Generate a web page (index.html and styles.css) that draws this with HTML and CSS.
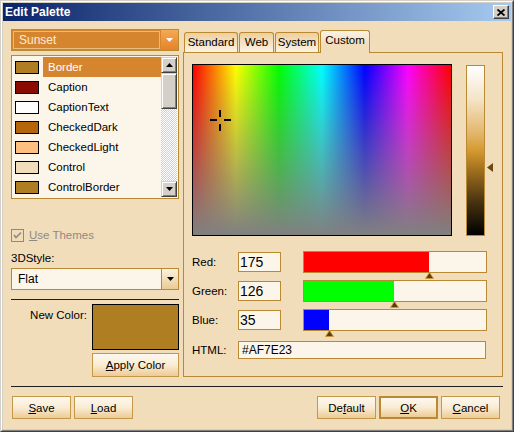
FILE: index.html
```html
<!DOCTYPE html>
<html lang="en">
<head>
<meta charset="UTF-8">
<title>Edit Palette</title>
<link rel="stylesheet" href="styles.css">
</head>
<body>
<div class="window">
  <div class="frame">

    <div class="titlebar">
      <span class="title">Edit Palette</span>
      <div class="close">
        <svg width="8" height="7" viewBox="0 0 8 7"><path d="M0.5 0.5 L7.5 6.5 M7.5 0.5 L0.5 6.5" stroke="#000" stroke-width="1.8"/></svg>
      </div>
    </div>

    <div class="body">
      <div class="main">

        <div class="left">
          <div class="combo combo-scheme">
            <div class="combo-value">Sunset</div>
            <div class="combo-btn">
              <svg width="7" height="4" viewBox="0 0 7 4"><polygon points="0,0 7,0 3.5,4" fill="#fff"/></svg>
            </div>
          </div>

          <div class="list">
            <ul class="items">
              <li class="item selected"><span class="swatch" style="background:#AF7E23"></span><span class="name">Border</span></li>
              <li class="item"><span class="swatch" style="background:#8B0B00"></span><span class="name">Caption</span></li>
              <li class="item"><span class="swatch" style="background:#FFFFFF"></span><span class="name">CaptionText</span></li>
              <li class="item"><span class="swatch" style="background:#B5650A"></span><span class="name">CheckedDark</span></li>
              <li class="item"><span class="swatch" style="background:#FFBF80"></span><span class="name">CheckedLight</span></li>
              <li class="item"><span class="swatch" style="background:#F2DDBB"></span><span class="name">Control</span></li>
              <li class="item"><span class="swatch" style="background:#AF7E23"></span><span class="name">ControlBorder</span></li>
            </ul>
            <div class="scrollbar">
              <div class="sb-btn">
                <svg width="7" height="4" viewBox="0 0 7 4"><polygon points="3.5,0 7,4 0,4" fill="#000"/></svg>
              </div>
              <div class="sb-thumb"></div>
              <div class="sb-track"></div>
              <div class="sb-btn">
                <svg width="7" height="4" viewBox="0 0 7 4"><polygon points="0,0 7,0 3.5,4" fill="#000"/></svg>
              </div>
            </div>
          </div>

          <div class="check">
            <span class="check-box">
              <svg width="11" height="11" viewBox="0 0 11 11"><polyline points="2,5 4,7.5 9,2.5" fill="none" stroke="#8E8A82" stroke-width="1.6"/></svg>
            </span>
            <span class="check-text"><u>U</u>se Themes</span>
          </div>

          <div class="field-label">3DStyle:</div>
          <div class="combo combo-style">
            <div class="combo-value">Flat</div>
            <div class="combo-btn">
              <svg width="7" height="4" viewBox="0 0 7 4"><polygon points="0,0 7,0 3.5,4" fill="#000"/></svg>
            </div>
          </div>

          <div class="sep"></div>

          <div class="newcolor">
            <span class="newcolor-label">New Color:</span>
            <div class="preview"></div>
          </div>
          <button class="btn apply"><u>A</u>pply Color</button>
        </div>

        <div class="right">
          <div class="tabs">
            <div class="tab tab-standard">Standard</div>
            <div class="tab tab-web">Web</div>
            <div class="tab tab-system">System</div>
            <div class="tab tab-custom active">Custom</div>
          </div>
          <div class="panel">
            <div class="picker">
              <div class="spectrum">
                <svg class="crosshair" width="21" height="21" viewBox="0 0 21 21">
                  <path d="M0 10 H7 M14 10 H21 M10 0 V7 M10 14 V21" stroke="#000" stroke-width="2"/>
                </svg>
              </div>
              <div class="lum">
                <svg class="lum-arrow" width="6" height="9" viewBox="0 0 6 9"><polygon points="0,4.5 6,0 6,9" fill="#6B4A12"/></svg>
              </div>
            </div>

            <div class="rows">
              <div class="row">
                <span class="row-label">Red:</span>
                <div class="num">175</div>
                <div class="bar">
                  <div class="fill fill-red" style="width:125px"></div>
                  <svg class="marker" style="left:121px" width="9" height="7" viewBox="0 0 9 7"><polygon points="4.5,0.5 8.5,6.5 0.5,6.5" fill="#5C3D08" stroke="#C8963C" stroke-width="1"/></svg>
                </div>
              </div>
              <div class="row">
                <span class="row-label">Green:</span>
                <div class="num">126</div>
                <div class="bar">
                  <div class="fill fill-green" style="width:90px"></div>
                  <svg class="marker" style="left:86px" width="9" height="7" viewBox="0 0 9 7"><polygon points="4.5,0.5 8.5,6.5 0.5,6.5" fill="#5C3D08" stroke="#C8963C" stroke-width="1"/></svg>
                </div>
              </div>
              <div class="row">
                <span class="row-label">Blue:</span>
                <div class="num">35</div>
                <div class="bar">
                  <div class="fill fill-blue" style="width:25px"></div>
                  <svg class="marker" style="left:21px" width="9" height="7" viewBox="0 0 9 7"><polygon points="4.5,0.5 8.5,6.5 0.5,6.5" fill="#5C3D08" stroke="#C8963C" stroke-width="1"/></svg>
                </div>
              </div>
              <div class="row html-row">
                <span class="row-label">HTML:</span>
                <div class="html-input">#AF7E23</div>
              </div>
            </div>
          </div>
        </div>

      </div>

      <div class="bottom-sep"></div>

      <div class="footer">
        <div class="footer-group">
          <button class="btn"><u>S</u>ave</button>
          <button class="btn"><u>L</u>oad</button>
        </div>
        <div class="footer-group">
          <button class="btn">De<u>f</u>ault</button>
          <button class="btn btn-default"><u>O</u>K</button>
          <button class="btn"><u>C</u>ancel</button>
        </div>
      </div>
    </div>

  </div>
</div>
</body>
</html>
```

FILE: styles.css
```css
* {
  box-sizing: border-box;
}

body {
  margin: 0;
  font-family: "Liberation Sans", Arial, sans-serif;
  font-size: 11px;
  color: #000;
}

.window {
  width: 514px;
  height: 432px;
  border: 1px solid;
  border-color: #D4D0C8 #404040 #404040 #D4D0C8;
}

.frame {
  height: 100%;
  border: 1px solid;
  border-color: #FFFFFF #808080 #808080 #FFFFFF;
  padding: 1px;
  background: #D4D0C8;
}

/* title bar */
.titlebar {
  height: 18px;
  display: flex;
  align-items: center;
  justify-content: space-between;
  padding: 0 2px 0 2px;
  background: linear-gradient(to right, #0A246A, #A6CAF0);
}

.title {
  color: #fff;
  font-weight: bold;
  font-size: 12px;
}

.close {
  width: 16px;
  height: 14px;
  display: flex;
  align-items: center;
  justify-content: center;
  background: #D4D0C8;
  border: 1px solid;
  border-color: #FFFFFF #404040 #404040 #FFFFFF;
  box-shadow: inset -1px -1px #808080;
}

/* dialog body */
.body {
  height: 408px;
  background: #F2DDBB;
  padding: 8px 8px 0 8px;
}

.main {
  display: flex;
  gap: 4px;
  height: 348px;
}

.left {
  width: 168px;
  display: flex;
  flex-direction: column;
}

.right {
  width: 320px;
  display: flex;
  flex-direction: column;
}

/* combos */
.combo {
  height: 22px;
  display: flex;
  border: 1px solid #B98A33;
  background: #FCF6EA;
  font-size: 12px;
}

.combo-value {
  flex: 1;
  display: flex;
  align-items: center;
  padding-left: 6px;
}

.combo-btn {
  width: 17px;
  display: flex;
  align-items: center;
  justify-content: center;
  border-left: 1px solid #B98A33;
  background: linear-gradient(#FCF1DF, #EBCB93);
}

.combo-scheme {
  background: #D6852F;
}

.combo-scheme .combo-value {
  margin: 1px;
  padding-left: 5px;
  border: 1px solid rgba(255, 230, 190, 0.55);
  color: #FCEBD2;
}

.combo-scheme .combo-btn {
  border-left: none;
  background: linear-gradient(#F5A954, #E5822A);
}

.combo-style {
  margin-top: 3px;
}

/* colour list */
.list {
  margin-top: 4px;
  height: 144px;
  display: flex;
  border: 1px solid #B98A33;
  background: #FCF6EA;
}

.items {
  flex: 1;
  list-style: none;
  margin: 0;
  padding: 1px 0 0 0;
  overflow: hidden;
}

.item {
  height: 20px;
  display: flex;
  align-items: center;
  padding-left: 3px;
}

.swatch {
  width: 24px;
  height: 13px;
  border: 1px solid #000;
}

.name {
  flex: 1;
  height: 20px;
  margin-left: 4px;
  padding-left: 5px;
  display: flex;
  align-items: center;
  font-size: 11.5px;
}

.item.selected .name {
  background: #D6852F;
  color: #fff;
}

.scrollbar {
  width: 16px;
  margin: 1px 1px 1px 0;
  display: flex;
  flex-direction: column;
}

.sb-btn, .sb-thumb {
  background: #D4D0C8;
  border: 1px solid;
  border-color: #D4D0C8 #404040 #404040 #D4D0C8;
  box-shadow: inset 1px 1px #fff, inset -1px -1px #808080;
}

.sb-btn {
  height: 16px;
  display: flex;
  align-items: center;
  justify-content: center;
}

.sb-thumb {
  height: 36px;
}

.sb-track {
  flex: 1;
  background: repeating-conic-gradient(#D4D0C8 0 25%, #FFFFFF 0 50%) 0 0 / 2px 2px;
}

/* checkbox */
.check {
  margin-top: 28px;
  height: 16px;
  display: flex;
  align-items: center;
  gap: 5px;
  color: #8E8A82;
  font-size: 11.5px;
}

.check-box {
  width: 13px;
  height: 13px;
  display: flex;
  align-items: center;
  justify-content: center;
  border: 1px solid #8E8A82;
}

.field-label {
  margin-top: 8px;
  height: 14px;
  line-height: 14px;
  font-size: 11.5px;
}

.sep {
  margin-top: 9px;
  height: 1px;
  background: #1E1E1E;
}

.newcolor {
  margin-top: 4px;
  display: flex;
  justify-content: flex-end;
  gap: 5px;
}

.newcolor-label {
  padding-top: 5px;
  font-size: 11.5px;
}

.preview {
  width: 87px;
  height: 46px;
  border: 1px solid #000;
  background: #AF7E23;
}

/* buttons */
.btn {
  width: 59px;
  height: 23px;
  padding: 0;
  font-family: inherit;
  font-size: 11.5px;
  color: #000;
  border: 1px solid #C39849;
  background: linear-gradient(#FDF8EE, #F9ECD4 50%, #EDCB95);
}

.btn-default {
  border: 2px solid #B98A33;
}

.apply {
  width: 87px;
  height: 24px;
  margin-top: 3px;
  align-self: flex-end;
}

/* tabs */
.tabs {
  height: 23px;
  display: flex;
  align-items: flex-end;
  gap: 1px;
  padding-left: 1px;
  position: relative;
  z-index: 1;
}

.tab {
  height: 20px;
  line-height: 18px;
  text-align: center;
  font-size: 11.5px;
  border: 1px solid #B98A33;
  border-bottom: none;
  border-radius: 3px 3px 0 0;
  background: linear-gradient(#EFCF9C, #FCF3E4);
}

.tab-standard { width: 54px; }
.tab-web { width: 35px; }
.tab-system { width: 44px; }

.tab-custom {
  width: 50px;
}

.tab.active {
  height: 23px;
  margin-bottom: -1px;
  background: linear-gradient(#FCF3E4, #F2DDBB 60%);
}

.panel {
  height: 325px;
  border: 1px solid #B98A33;
  background: #F2DDBB;
  padding: 11px 8px 0 8px;
}

.picker {
  display: flex;
  gap: 14px;
}

.spectrum {
  position: relative;
  width: 260px;
  height: 172px;
  border: 1px solid #000;
  background:
    linear-gradient(rgba(128, 128, 128, 0), #808080),
    linear-gradient(to right, #FF0000, #FFFF00 16.6%, #00FF00 33.3%, #00FFFF 50%, #0000FF 66.6%, #FF00FF 83.3%, #FF0000);
}

.crosshair {
  position: absolute;
  left: 17px;
  top: 45px;
}

.lum {
  position: relative;
  width: 19px;
  height: 171px;
  margin-top: 1px;
  border: 1px solid #B98A33;
  background: linear-gradient(#FFFFFF, #F4E3C6 20%, #E3B56A 40%, #D49A30 50%, #A87520 60%, #4A3410 80%, #000000);
}

.lum-arrow {
  position: absolute;
  right: -9px;
  top: 97px;
}

/* sliders */
.rows {
  margin-top: 15px;
}

.row {
  height: 22px;
  display: flex;
  align-items: center;
  margin-bottom: 7px;
}

.row-label {
  width: 46px;
  font-size: 11.5px;
}

.num {
  width: 43px;
  height: 20px;
  line-height: 18px;
  padding-left: 1px;
  font-size: 14px;
  border: 1px solid #B98A33;
  background: #FCF6EA;
}

.bar {
  position: relative;
  width: 184px;
  height: 22px;
  margin-left: 22px;
  border: 1px solid #B98A33;
  background: #FCF6EA;
}

.fill {
  height: 100%;
}

.fill-red { background: #FF0000; }
.fill-green { background: #00FF00; }
.fill-blue { background: #0000FF; }

.marker {
  position: absolute;
  top: 20px;
}

.html-row {
  margin-top: 8px;
}

.html-input {
  width: 248px;
  height: 18px;
  line-height: 16px;
  padding-left: 3px;
  font-size: 12px;
  border: 1px solid #B98A33;
  background: #FCF6EA;
}

/* footer */
.bottom-sep {
  margin-top: 9px;
  height: 1px;
  background: #1E1E1E;
}

.footer {
  margin-top: 9px;
  display: flex;
  justify-content: space-between;
  padding: 0 3px 0 1px;
}

.footer-group {
  display: flex;
  gap: 3px;
}
```
